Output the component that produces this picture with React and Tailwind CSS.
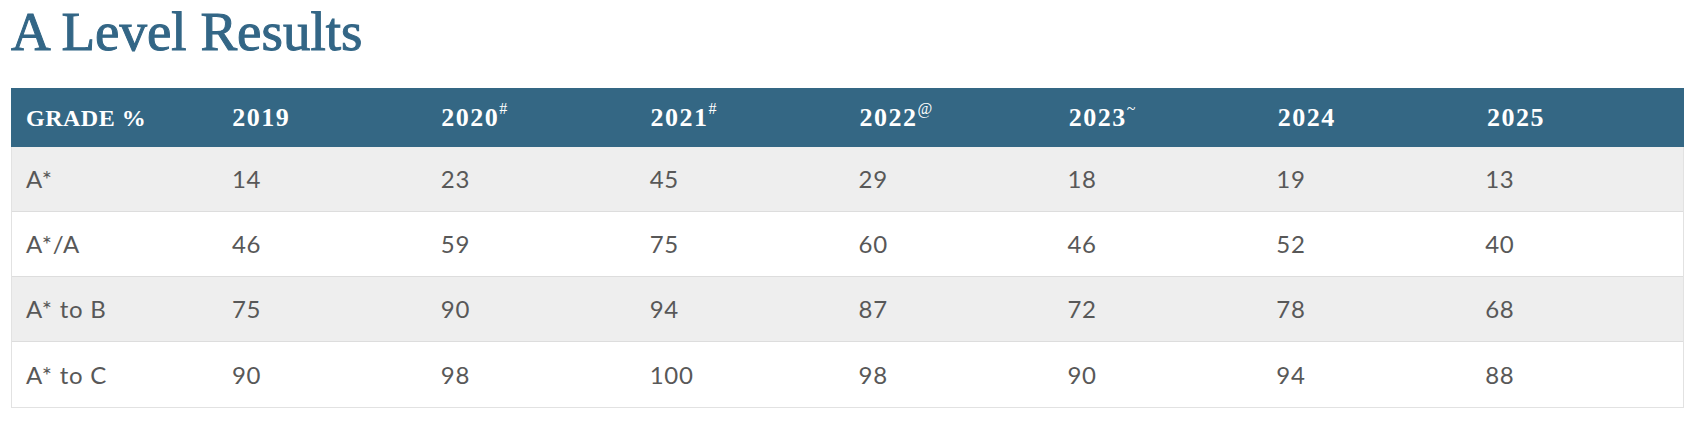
import React from 'react';

const years = [
  { label: '2019' },
  { label: '2020', mark: '#' },
  { label: '2021', mark: '#' },
  { label: '2022', mark: '@' },
  { label: '2023', mark: '~' },
  { label: '2024' },
  { label: '2025' },
];

const rows = [
  { grade: 'A*', values: [14, 23, 45, 29, 18, 19, 13] },
  { grade: 'A*/A', values: [46, 59, 75, 60, 46, 52, 40] },
  { grade: 'A* to B', values: [75, 90, 94, 87, 72, 78, 68] },
  { grade: 'A* to C', values: [90, 98, 100, 98, 90, 94, 88] },
];

export default function App() {
  return (
    <div className="bg-white min-h-[443px] pl-[11px] pr-[19px] pt-[4px]">
      <h1 className="font-['Liberation_Serif',serif] text-[55px] leading-none text-[#336686] [-webkit-text-stroke:1px_#336686]">A Level Results</h1>

      <div className="mt-[29px] border-x border-b border-[#e2e2e2]">
        <div className="grid grid-cols-8 h-[59px] items-center bg-[#346784] -mx-px text-white font-['Liberation_Serif',serif] font-bold">
          <div className="pl-[15px] text-[24px] tracking-[0.5px]">GRADE %</div>
          {years.map((y) => (
            <div key={y.label} className="pl-[12px] text-[26px] tracking-[1.5px]">
              {y.label}
              {y.mark && <sup className="text-[16px] font-normal tracking-normal top-[-0.75em]">{y.mark}</sup>}
            </div>
          ))}
        </div>

        {rows.map((r, i) => (
          <div
            key={r.grade}
            className={`grid grid-cols-8 h-[65px] items-center font-['Lato',sans-serif] text-[24px] tracking-[0.8px] text-[#585858] ${i % 2 === 0 ? 'bg-[#eeeeee]' : 'bg-white'} ${i < rows.length - 1 ? 'border-b border-[#dddddd]' : ''}`}
          >
            <div className="pl-[14px]">{r.grade}</div>
            {r.values.map((v, j) => (
              <div key={j} className="pl-[11px]">{v}</div>
            ))}
          </div>
        ))}
      </div>
    </div>
  );
}
